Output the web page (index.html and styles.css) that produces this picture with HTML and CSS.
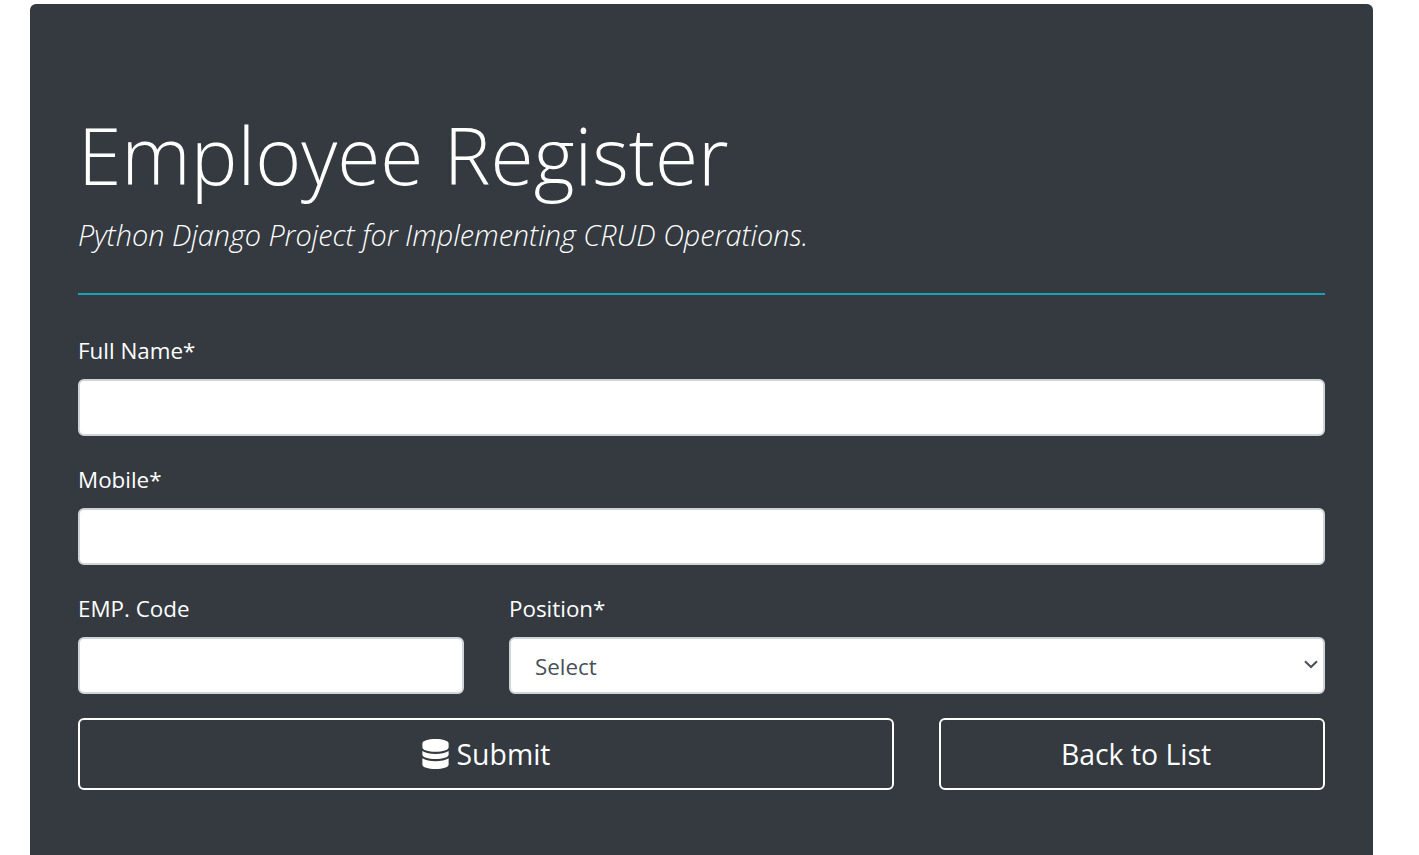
FILE: index.html
```html
<!DOCTYPE html>
<html lang="en">
<head>
  <meta charset="UTF-8">
  <title>Employee Register</title>
  <link rel="stylesheet" href="styles.css">
</head>
<body>
  <div class="jumbotron">
    <h1 class="title">Employee Register</h1>
    <p class="lead">Python Django Project for Implementing CRUD Operations.</p>
    <hr class="rule">
    <form class="form">
      <div class="field">
        <label class="label" for="fullname">Full Name*</label>
        <input class="input" id="fullname" type="text">
      </div>
      <div class="field">
        <label class="label" for="mobile">Mobile*</label>
        <input class="input" id="mobile" type="text">
      </div>
      <div class="row row-last">
        <div class="field">
          <label class="label" for="code">EMP. Code</label>
          <input class="input" id="code" type="text">
        </div>
        <div class="field">
          <label class="label" for="position">Position*</label>
          <div class="select">
            <span class="select-text">Select</span>
            <svg class="chevron" viewBox="0 0 14 9" width="14" height="9"><path d="M1 1.2 7 7l6-5.8" fill="none" stroke="#495057" stroke-width="2"/></svg>
          </div>
        </div>
      </div>
      <div class="row row-buttons">
        <button class="btn" type="button">
          <svg class="db-icon" viewBox="0 0 448 512" width="27" height="30"><path fill="#fff" d="M448 73v70c0 40-100 73-224 73S0 183 0 143V73C0 33 100 0 224 0s224 33 224 73zm0 132v62c0 40-100 73-224 73S0 307 0 267v-62c48 33 136 49 224 49s176-16 224-49zm0 124v110c0 40-100 73-224 73S0 479 0 439V329c48 33 136 49 224 49s176-16 224-49z"/></svg>
          Submit
        </button>
        <button class="btn btn-back" type="button">Back to List</button>
      </div>
    </form>
  </div>
</body>
</html>
```

FILE: styles.css
```css
html, body {
  height: 100%;
  overflow: hidden;
}

body {
  margin: 0;
  padding: 4px 46px 0 30px;
  box-sizing: border-box;
  background-color: #fff;
  font-family: "Open Sans", "Noto Sans", sans-serif;
  color: #fff;
}

.jumbotron {
  background-color: #343a40;
  border-radius: 6px;
  padding: 108px 48px 90px;
}

.title {
  margin: 0;
  font-size: 78.5px;
  font-weight: 300;
  line-height: 86px;
}

.lead {
  margin: 19px 0 0;
  font-size: 28.8px;
  font-weight: 300;
  font-style: italic;
  line-height: 36px;
}

.rule {
  margin: 40px 0 0;
  border: 0;
  border-top: 2px solid #17a2b8;
}

.form {
  margin-top: 38px;
}

.field {
  margin-bottom: 26px;
}

.label {
  display: block;
  font-size: 22.4px;
  line-height: 35px;
  margin-bottom: 11px;
}

.input,
.select {
  display: block;
  width: 100%;
  height: 57px;
  box-sizing: border-box;
  background-color: #fff;
  border: 2px solid #ced4da;
  border-radius: 6px;
}

.select {
  display: flex;
  align-items: center;
  justify-content: space-between;
  padding: 0 5px 0 24px;
  font-size: 22.4px;
  color: #495057;
}

.select-text {
  padding-top: 2px;
}

.chevron {
  margin-bottom: 2px;
}

.row {
  display: grid;
  grid-template-columns: 386px 1fr;
  column-gap: 45px;
}

.row-last .field {
  margin-bottom: 24px;
}

.row-buttons {
  grid-template-columns: 1fr 386px;
}

.btn {
  display: flex;
  align-items: center;
  justify-content: center;
  gap: 8px;
  height: 72px;
  background: transparent;
  border: 2px solid #fff;
  border-radius: 6px;
  color: #fff;
  font-family: inherit;
  font-size: 28.4px;
}

.btn-back {
  padding-left: 14px;
}
```
